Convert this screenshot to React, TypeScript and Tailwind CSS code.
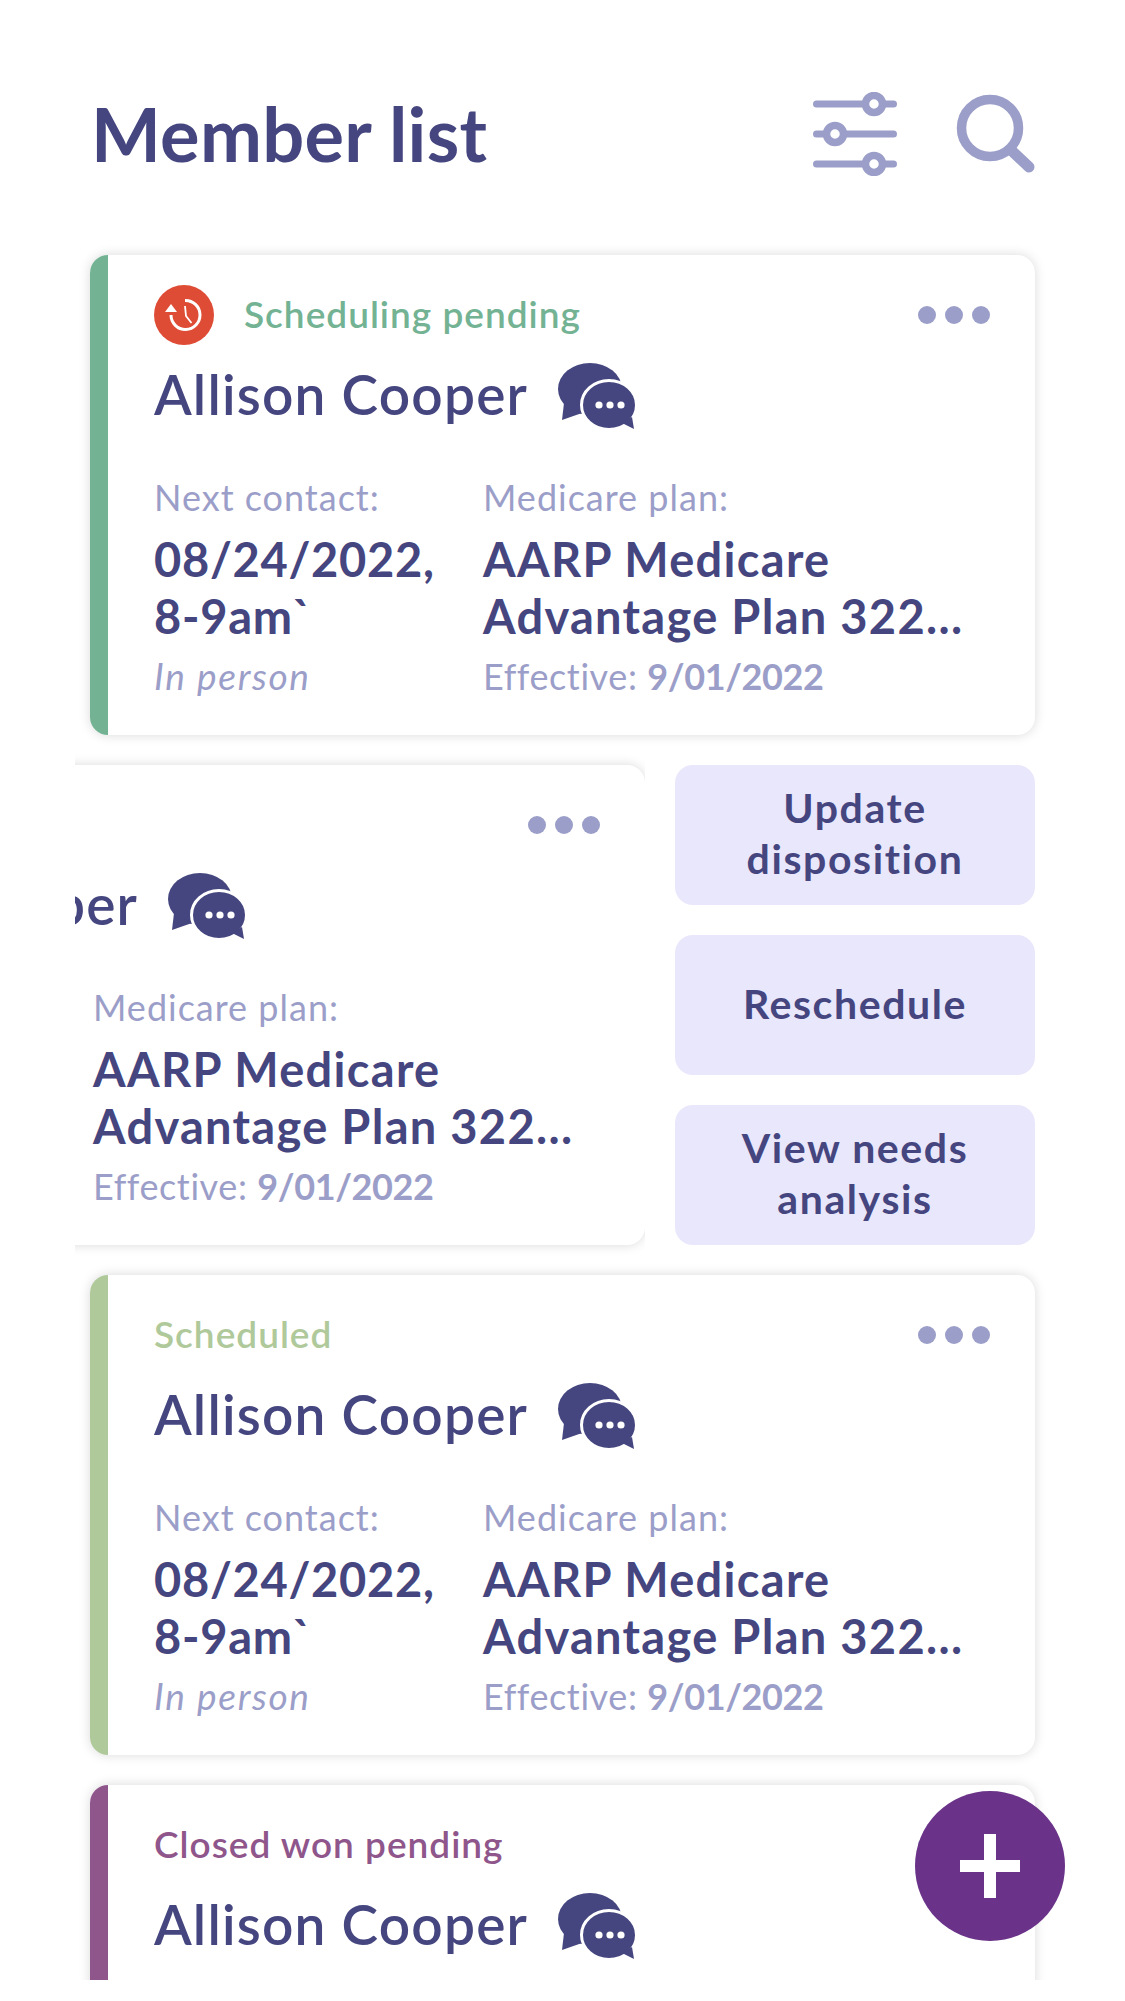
function FilterIcon() {
  return (
    <svg width="84" height="84" viewBox="0 0 84 84" fill="none" className="block">
      <path d="M3.5 12H80.5M3.5 42H80.5M3.5 72H80.5" stroke="#9b9ec8" strokeWidth="7" strokeLinecap="round" />
      <g fill="#fff" stroke="#9b9ec8" strokeWidth="7.5">
        <circle cx="61" cy="12" r="8.5" />
        <circle cx="22" cy="42" r="8.5" />
        <circle cx="61" cy="72" r="8.5" />
      </g>
    </svg>
  );
}

function SearchIcon() {
  return (
    <svg width="80" height="80" viewBox="0 0 80 80" fill="none" className="block">
      <circle cx="34" cy="34" r="28.5" stroke="#9b9ec8" strokeWidth="9.5" />
      <path d="M55 56L73 73" stroke="#9b9ec8" strokeWidth="11" strokeLinecap="round" />
    </svg>
  );
}

function ChatIcon() {
  return (
    <svg width="78" height="68" viewBox="0 0 78 68" className="block">
      <g fill="#45467f">
        <ellipse cx="32" cy="26" rx="32" ry="26" />
        <path d="M6 40L4 57L24 50Z" />
      </g>
      <ellipse cx="51" cy="42" rx="27.5" ry="24.5" fill="#45467f" stroke="#fff" strokeWidth="3" />
      <path d="M64 60L76 66L74 54Z" fill="#45467f" />
      <g fill="#fff">
        <circle cx="41" cy="42" r="3.6" />
        <circle cx="52" cy="42" r="3.6" />
        <circle cx="63" cy="42" r="3.6" />
      </g>
    </svg>
  );
}

function HistoryBadge() {
  return (
    <div className="w-[60px] h-[60px] rounded-full bg-[#df4c36] shrink-0 mr-[30px]">
      <svg width="60" height="60" viewBox="0 0 60 60" fill="none" className="block">
        <path d="M31 15.5A14.5 14.5 0 1 1 17 30" stroke="#fff" strokeWidth="3" />
        <path d="M11 27H23L17 19Z" fill="#fff" />
        <path d="M31 21L32 31L37.5 38" stroke="#fff" strokeWidth="1.8" />
      </svg>
    </div>
  );
}

function Dots() {
  return (
    <div className="flex gap-[9px]">
      <div className="w-[18px] h-[18px] rounded-full bg-[#9b9ec8]" />
      <div className="w-[18px] h-[18px] rounded-full bg-[#9b9ec8]" />
      <div className="w-[18px] h-[18px] rounded-full bg-[#9b9ec8]" />
    </div>
  );
}

function MemberCard({
  status,
  barClass,
  statusClass,
  pending,
}: {
  status?: string;
  barClass: string;
  statusClass?: string;
  pending?: boolean;
}) {
  return (
    <div className="w-[945px] h-[480px] shrink-0 rounded-[18px] bg-white shadow-[0_0_12px_rgba(0,0,0,0.15)] overflow-hidden flex">
      <div className={`w-[18px] shrink-0 ${barClass}`} />
      <div className="flex-1 pl-[46px] pr-[45px] pt-[30px]">
        <div className="flex items-center h-[60px]">
          {pending && <HistoryBadge />}
          <div className={`text-[37px] tracking-[1px] font-semibold -mt-[2px] ${statusClass}`}>{status}</div>
          <div className="ml-auto">
            <Dots />
          </div>
        </div>
        <div className="flex items-center mt-[13px] h-[72px]">
          <div className="text-[55px] tracking-[1.2px] font-semibold text-[#45467f] leading-none">Allison Cooper</div>
          <div className="ml-[30px] mt-[6px]">
            <ChatIcon />
          </div>
        </div>
        <div className="flex mt-[45px]">
          <div className="w-[329px] shrink-0">
            <div className="text-[36px] tracking-[1px] leading-[44px] text-[#9b9ec8]">Next contact:</div>
            <div className="mt-[12px] text-[47px] tracking-[0.7px] leading-[57px] font-bold text-[#45467f]">
              08/24/2022,
              <br />
              8-9am`
            </div>
            <div className="mt-[9px] text-[37px] tracking-[1.7px] leading-[44px] italic text-[#9b9ec8]">In person</div>
          </div>
          <div className="flex-1">
            <div className="text-[36px] tracking-[1px] leading-[44px] text-[#9b9ec8]">Medicare plan:</div>
            <div className="mt-[12px] text-[47px] tracking-[1.3px] leading-[57px] font-bold text-[#45467f] whitespace-nowrap">
              AARP Medicare
              <br />
              Advantage Plan 322...
            </div>
            <div className="mt-[9px] text-[36px] tracking-[0.6px] leading-[44px] text-[#9b9ec8]">
              Effective: <span className="font-bold tracking-[-0.4px]">9/01/2022</span>
            </div>
          </div>
        </div>
      </div>
    </div>
  );
}

function ActionButton({ children }: { children: React.ReactNode }) {
  return (
    <div className="h-[140px] pb-[4px] rounded-[18px] bg-[#e9e7fb] flex items-center justify-center text-center text-[41px] tracking-[1.6px] leading-[51px] font-bold text-[#45467f]">
      {children}
    </div>
  );
}

export default function App() {
  return (
    <div
      className="relative w-[1125px] h-[2001px] bg-white overflow-hidden"
      style={{ fontFamily: 'Lato, "Open Sans", sans-serif' }}
    >
      <div className="h-[1980px] overflow-hidden">
        <div className="flex items-center justify-between h-[255px] pl-[91px] pr-[89px] pb-[45px] pt-[58px]">
          <h1 className="text-[74px] tracking-[0.3px] font-bold text-[#45467f] leading-none">Member list</h1>
          <div className="flex items-center gap-[59px]">
            <FilterIcon />
            <SearchIcon />
          </div>
        </div>
        <div className="flex flex-col gap-[30px] pl-[90px] pr-[90px]">
          <MemberCard status="Scheduling pending" barClass="bg-[#73b394]" statusClass="text-[#73b394]" pending />
          <div className="flex -ml-[15px] gap-[30px]">
            <div className="w-[570px] shrink-0 overflow-hidden -my-[15px] py-[15px] pr-[15px]">
              <div className="-ml-[375px]">
                <MemberCard barClass="bg-white" />
              </div>
            </div>
            <div className="flex-1 flex flex-col gap-[30px]">
              <ActionButton>
                Update
                <br />
                disposition
              </ActionButton>
              <ActionButton>Reschedule</ActionButton>
              <ActionButton>
                View needs
                <br />
                analysis
              </ActionButton>
            </div>
          </div>
          <MemberCard status="Scheduled" barClass="bg-[#afc99b]" statusClass="text-[#afc99b]" />
          <MemberCard status="Closed won pending" barClass="bg-[#8f568c]" statusClass="text-[#8f568c]" />
        </div>
      </div>
      <div className="absolute left-[915px] top-[1791px] w-[150px] h-[150px] rounded-full bg-[#6a3389] flex items-center justify-center">
        <svg width="60" height="64" viewBox="0 0 60 64" fill="#fff" className="block">
          <path d="M24 0H36V26H60V38H36V64H24V38H0V26H24Z" />
        </svg>
      </div>
    </div>
  );
}
